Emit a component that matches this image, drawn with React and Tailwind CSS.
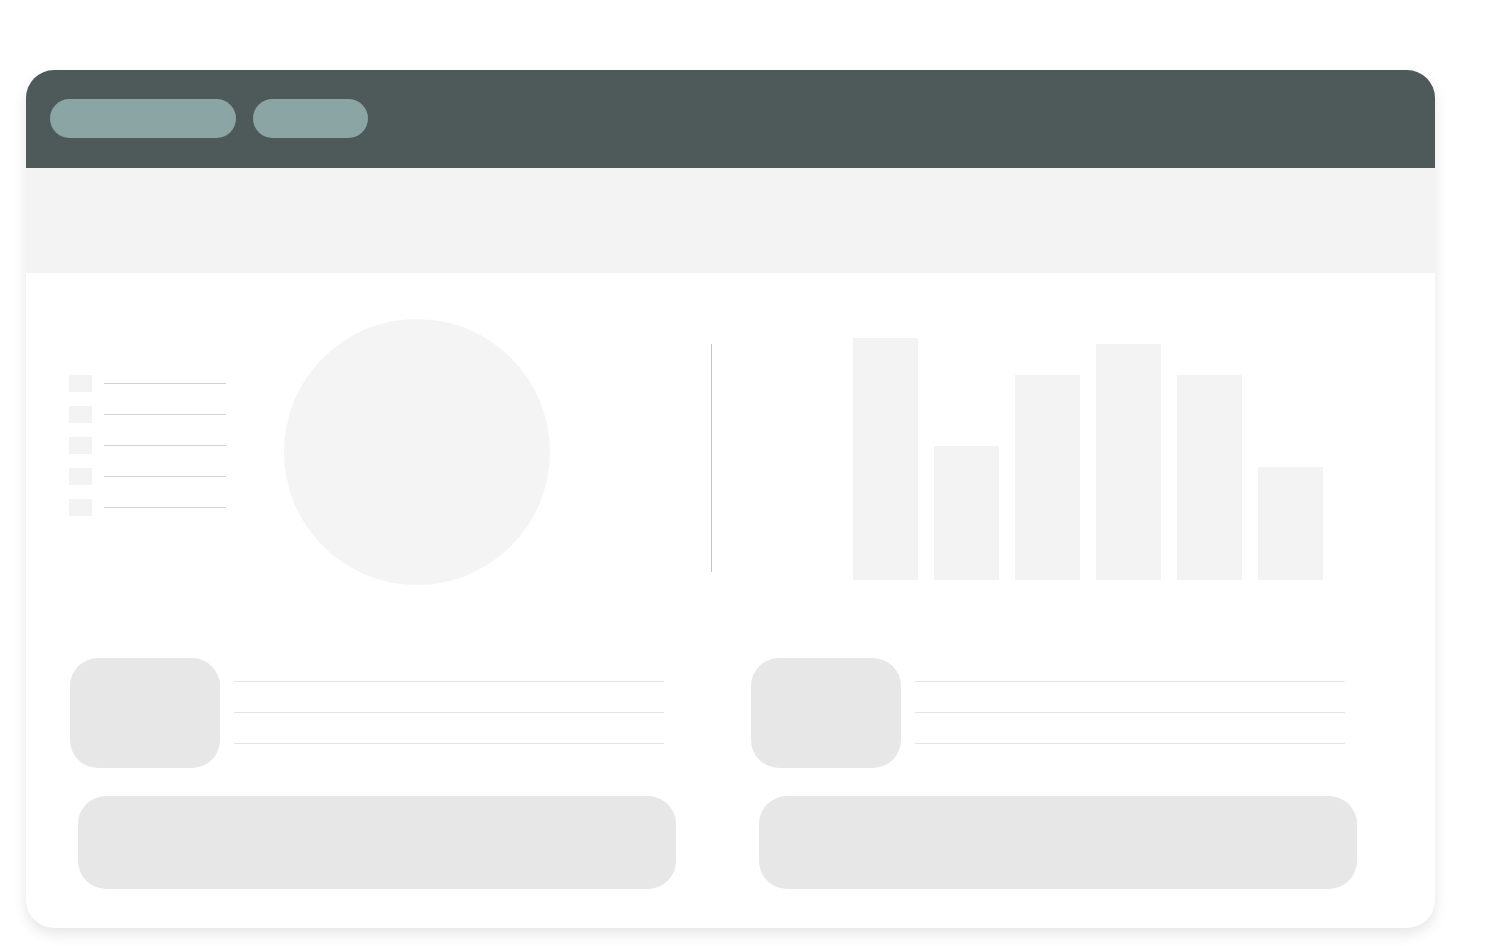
export default function App() {
  const bars = [242, 134, 205, 236, 205, 113];
  const legend = [0, 1, 2, 3, 4];
  return (
    <div className="w-full h-[946px] bg-white pt-[70px] pl-[26px]" style={{ fontFamily: '"Liberation Sans", sans-serif' }}>
      <div className="w-[1409px] h-[858px] rounded-[28px] bg-white overflow-hidden shadow-[0_6px_14px_rgba(0,0,0,0.10)]">
        <div className="h-[98px] bg-[#4e5a5a] flex items-start gap-[17px] pl-[24px] pt-[29px]">
          <div className="w-[186px] h-[39px] rounded-full bg-[#8aa5a3]" />
          <div className="w-[115px] h-[39px] rounded-full bg-[#8aa5a3]" />
        </div>
        <div className="h-[105px] bg-[#f3f3f3]" />
        <div className="h-[385px] flex items-start pl-[43px]">
          <div className="mt-[102px] flex flex-col gap-[14px]">
            {legend.map((i) => (
              <div key={i} className="flex items-center gap-[12px]">
                <div className="w-[23px] h-[17px] bg-[#f3f3f3]" />
                <div className="w-[122px] h-px bg-[#d2d2d2]" />
              </div>
            ))}
          </div>
          <div className="ml-[58px] mt-[46px] w-[266px] h-[266px] rounded-full bg-[#f4f4f4]" />
          <div className="ml-[161px] mt-[71px] w-px h-[228px] bg-[#c4c4c4]" />
          <div className="ml-[141px] mt-[64px] h-[243px] flex items-end gap-[16px]">
            {bars.map((h, i) => (
              <div key={i} className="w-[65px] bg-[#f3f3f3]" style={{ height: h }} />
            ))}
          </div>
        </div>
        <div className="flex pl-[44px]">
          {[0, 1].map((c) => (
            <div key={c} className="w-[681px] flex flex-col">
              <div className="flex items-start gap-[14px]">
                <div className="w-[150px] h-[110px] rounded-[28px] bg-[#e7e7e7]" />
                <div className="pt-[23px] flex flex-col gap-[30px]">
                  <div className="w-[430px] h-px bg-[#e5e5e5]" />
                  <div className="w-[430px] h-px bg-[#e5e5e5]" />
                  <div className="w-[430px] h-px bg-[#e5e5e5]" />
                </div>
              </div>
              <div className="ml-[8px] mt-[28px] w-[598px] h-[93px] rounded-[28px] bg-[#e7e7e7]" />
            </div>
          ))}
        </div>
      </div>
    </div>
  );
}
